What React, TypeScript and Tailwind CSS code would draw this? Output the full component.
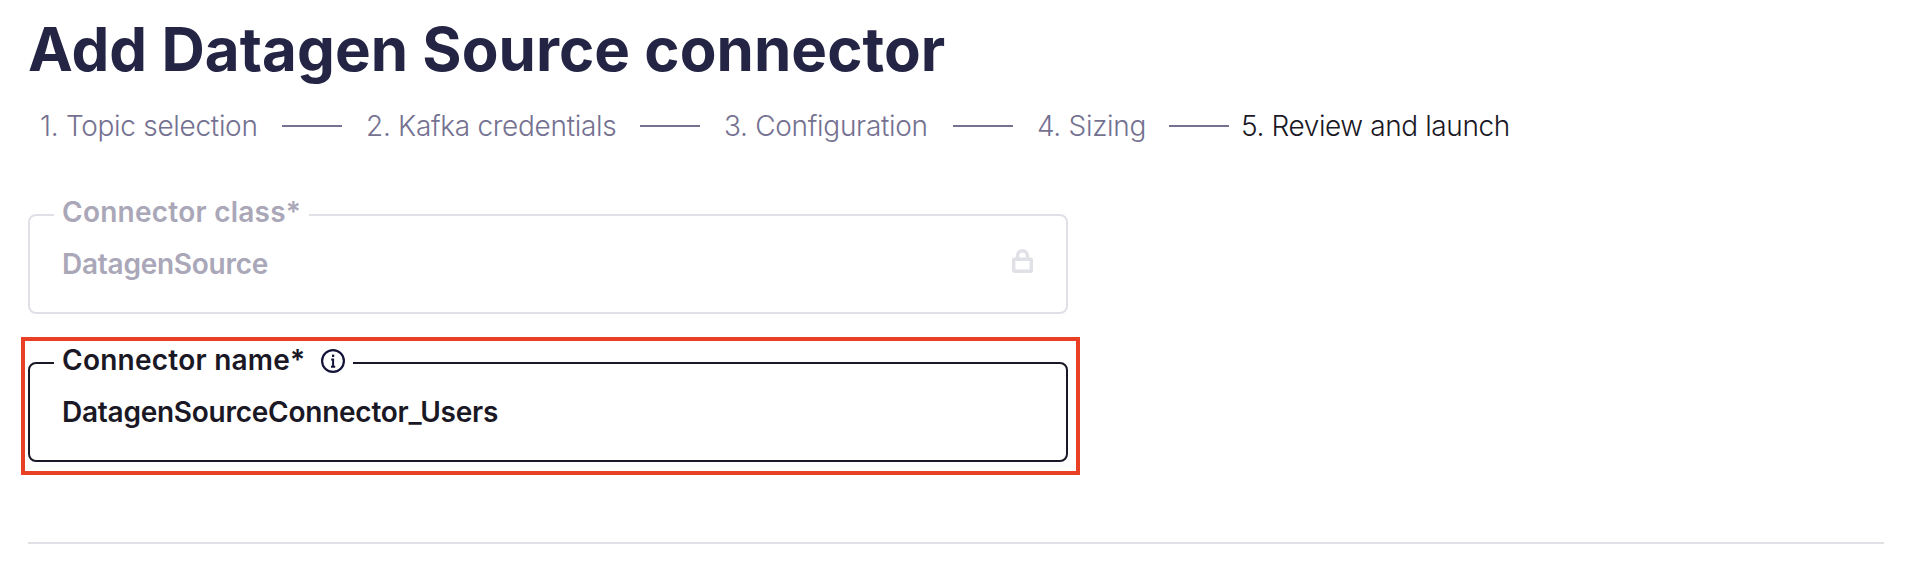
import type { ReactNode } from "react";

const steps = [
  { label: "1. Topic selection", width: "w-[242px]" },
  { label: "2. Kafka credentials", width: "w-[274px]" },
  { label: "3. Configuration", width: "w-[229px]" },
  { label: "4. Sizing", width: "w-[132px]" },
];

function LockIcon() {
  return (
    <svg width="22" height="24" viewBox="0 0 22 24" fill="none" stroke="#e0e0e7" strokeWidth="3.4">
      <rect x="1.7" y="10.3" width="17.6" height="12" rx="0.8" />
      <path d="M5.6 10V6.6a4.9 4.9 0 0 1 9.8 0V10" />
    </svg>
  );
}

function InfoIcon() {
  return (
    <svg width="24" height="24" viewBox="0 0 24 24" fill="none">
      <circle cx="12" cy="12" r="10.9" stroke="#14143a" strokeWidth="2.2" />
      <rect x="11" y="5.6" width="2.2" height="2.4" fill="#14143a" />
      <path d="M10.2 10.6h1.9v7.2M10 17.8h4.2" stroke="#14143a" strokeWidth="2" />
    </svg>
  );
}

function Field({
  label,
  labelWidth,
  value,
  tone,
  info,
  trailing,
}: {
  label: string;
  labelWidth: string;
  value: string;
  tone: string;
  info?: ReactNode;
  trailing?: ReactNode;
}) {
  return (
    <fieldset className={`h-[116px] w-[1040px] rounded-[8px] border-2 ${tone}`}>
      <legend className={`ml-6 flex h-[34px] items-center whitespace-nowrap pl-2 ${labelWidth}`}>
        <span className="relative -top-[3px] text-[28px] leading-[34px] font-semibold tracking-[0.25px]">{label}</span>
        {info && <span className="relative -top-[2px] ml-4">{info}</span>}
      </legend>
      <div className="mt-[15px] flex h-[34px] items-center justify-between pr-[32px] pl-8">
        <span className="text-[28px] leading-[34px] font-semibold tracking-[-0.25px]">{value}</span>
        <span className="-mt-[6px]">{trailing}</span>
      </div>
    </fieldset>
  );
}

export default function App() {
  return (
    <main className="h-[574px] w-[1912px] overflow-hidden bg-white pl-7 font-['Inter',sans-serif]">
      <h1 className="pt-[13px] text-[60px] leading-[73px] font-bold tracking-[0.05px] whitespace-nowrap text-[#242444]">
        Add Datagen Source connector
      </h1>
      <ol className="mt-[23px] flex h-[34px] items-center pl-3 text-[28px] leading-[34px] font-light tracking-[-0.3px] whitespace-nowrap text-[#747191]">
        {steps.map((step) => (
          <li key={step.label} className="flex items-center">
            <span className={step.width}>{step.label}</span>
            <span className="mr-6 h-[2px] w-[60px] bg-[#747191]" />
          </li>
        ))}
        <li className="-ml-3 tracking-[-0.4px] text-[#1a1825]">5. Review and launch</li>
      </ol>
      <div className="mt-[55px]">
        <Field
          label="Connector class*"
          labelWidth="w-[255px]"
          value="DatagenSource"
          tone="border-[#e0e0e7] text-[#a9a7b8]"
          trailing={<LockIcon />}
        />
      </div>
      <div className="-ml-[7px] mt-[23px] h-[138px] w-[1059px] border-4 border-[#e83f25] pt-[5px] pl-[3px]">
        <Field
          label="Connector name*"
          labelWidth="w-[299px]"
          value="DatagenSourceConnector_Users"
          tone="border-[#1a1825] text-[#1a1825]"
          info={<InfoIcon />}
        />
      </div>
      <hr className="mt-[67px] w-[1856px] border-0 border-t-2 border-[#e0e0e7]" />
    </main>
  );
}
